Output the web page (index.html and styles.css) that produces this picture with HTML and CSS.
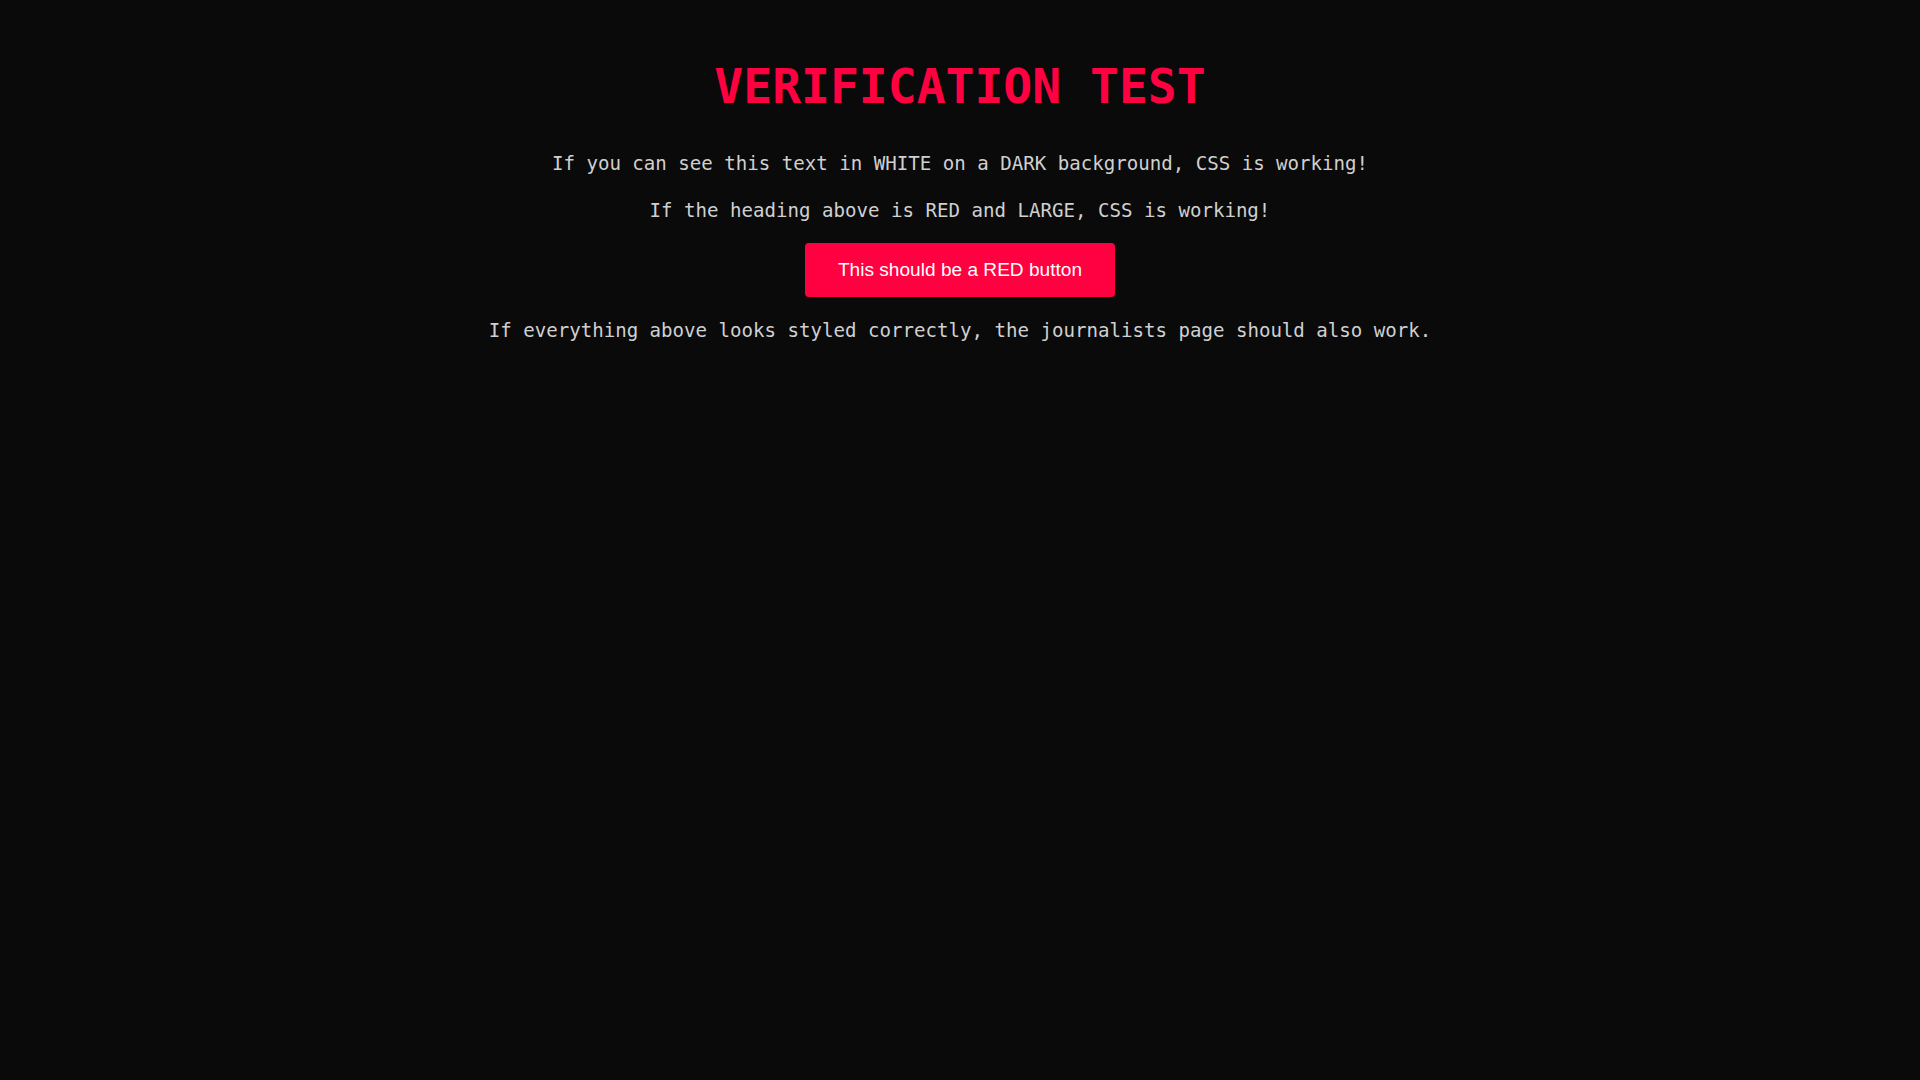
FILE: index.html
```html
<!DOCTYPE html>
<html lang="en">
<head>
<meta charset="utf-8">
<title>Verification Test</title>
<link rel="stylesheet" href="styles.css">
</head>
<body>
<main class="page">
  <h1 class="title">VERIFICATION TEST</h1>
  <p class="line">If you can see this text in WHITE on a DARK background, CSS is working!</p>
  <p class="line">If the heading above is RED and LARGE, CSS is working!</p>
  <button class="btn" type="button">This should be a RED button</button>
  <p class="line">If everything above looks styled correctly, the journalists page should also work.</p>
</main>
</body>
</html>
```

FILE: styles.css
```css
html, body {
  margin: 0;
  padding: 0;
  background: #0a0a0a;
  color: #d0d0d0;
  font-family: "DejaVu Sans Mono", monospace;
}
.page {
  display: flex;
  flex-direction: column;
  align-items: center;
  padding-top: 58px;
}
.title {
  margin: 0 0 35px;
  font-size: 48px;
  line-height: 56px;
  font-weight: bold;
  color: #ff0040;
}
.line {
  margin: 0 0 17px;
  font-size: 19.1px;
  line-height: 30px;
}
.btn {
  margin: 0 0 19px;
  width: 310px;
  height: 54px;
  border: none;
  border-radius: 4px;
  background: #ff0040;
  color: #ffffff;
  font-family: "Liberation Sans", Arial, sans-serif;
  font-size: 19.1px;
  cursor: pointer;
}
```
